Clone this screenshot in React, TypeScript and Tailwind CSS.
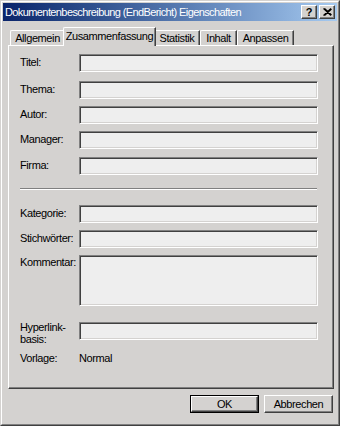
import React from "react";

const font = { fontFamily: '"Liberation Sans", Arial, sans-serif' };

function Field({ h = 18 }: { h?: number }) {
  return (
    <div
      className="w-[239px] border border-t-[#808080] border-l-[#808080] border-b-white border-r-white bg-[#eeeeee] shadow-[inset_1px_1px_0_#404040,inset_-1px_-1px_0_#d4d2d0]"
      style={{ height: h }}
    />
  );
}

function Row({ label, top, h = 18 }: { label: string; top: number; h?: number }) {
  return (
    <div className="flex items-center" style={{ marginTop: top }}>
      <div className="w-[59px] text-[11px] leading-[13px] tracking-[-0.4px] text-black -mt-[2px] whitespace-nowrap">{label}</div>
      <Field h={h} />
    </div>
  );
}

function Tab({ label, selected, w }: { label: string; selected?: boolean; w: number }) {
  if (selected) {
    return (
      <div
        className="relative z-10 -mx-[2px] h-[19px] -mb-[1px] flex items-start justify-center pt-[2px] border-t border-l border-t-white border-l-white border-r border-r-[#404040] bg-[#d4d2d0] rounded-tl-[2px] shadow-[inset_-1px_0_0_#808080] text-[11px] leading-[13px] tracking-[-0.4px]"
        style={{ width: w + 4 }}
      >
        {label}
      </div>
    );
  }
  return (
    <div
      className="h-[15px] flex items-start justify-center pt-[1px] border-t border-l border-t-white border-l-white border-r border-r-[#404040] shadow-[inset_-1px_0_0_#808080] rounded-tl-[2px] text-[11px] leading-[13px] tracking-[-0.4px]"
      style={{ width: w }}
    >
      {label}
    </div>
  );
}

export default function App() {
  return (
    <div
      className="w-[340px] h-[426px] bg-[#d4d2d0] border border-t-[#d4d2d0] border-l-[#d4d2d0] border-r-[#404040] border-b-[#404040] text-black overflow-hidden"
      style={font}
    >
      <div className="h-full w-full border border-t-white border-l-white border-r-[#808080] border-b-[#808080] flex flex-col px-[1px] pt-[1px]">
        {/* Title bar */}
        <div className="h-[18px] flex items-center justify-between bg-gradient-to-r from-[#0a246a] to-[#a6caf0] pl-[2px] pr-[2px]">
          <span className="text-white text-[11px] tracking-[-0.6px] leading-[13px]">
            Dokumentenbeschreibung (EndBericht) Eigenschaften
          </span>
          <div className="flex gap-[2px]">
            <div className="w-[16px] h-[14px] bg-[#d4d2d0] border border-t-white border-l-white border-r-[#404040] border-b-[#404040] shadow-[inset_-1px_-1px_0_#808080] flex items-center justify-center text-[11px] font-bold leading-none">
              ?
            </div>
            <div className="w-[16px] h-[14px] bg-[#d4d2d0] border border-t-white border-l-white border-r-[#404040] border-b-[#404040] shadow-[inset_-1px_-1px_0_#808080] flex items-center justify-center">
              <svg width="9" height="8" viewBox="0 0 9 8">
                <path d="M0.5 0.5 L8 7.5 M1.5 0.5 L8.5 7 M8 0.5 L0.5 7.5 M8.5 1 L1.5 7.5" stroke="black" strokeWidth="1.2" />
              </svg>
            </div>
          </div>
        </div>

        {/* Tabs */}
        <div className="flex items-end pl-[7px] mt-[6px] h-[18px]">
          <Tab label="Allgemein" w={55} />
          <Tab label="Zusammenfassung" selected w={89} />
          <Tab label="Statistik" w={46} />
          <Tab label="Inhalt" w={37} />
          <Tab label="Anpassen" w={57} />
        </div>

        {/* Panel */}
        <div className="ml-[5px] w-[326px] h-[344px] border border-t-white border-l-white border-r-[#404040] border-b-[#404040] shadow-[inset_-1px_-1px_0_#808080] pl-[11px] flex flex-col">
          <Row label="Titel:" top={8} />
          <Row label="Thema:" top={9} />
          <Row label="Autor:" top={7} />
          <Row label="Manager:" top={7} />
          <Row label="Firma:" top={8} />
          <div className="mt-[13px] w-[297px] h-[2px] border-t border-t-[#808080] border-b border-b-white" />
          <Row label="Kategorie:" top={15} />
          <Row label="Stichwörter:" top={7} />
          <div className="flex items-start mt-[7px]">
            <div className="w-[59px] text-[11px] leading-[13px] tracking-[-0.4px] pt-[1px]">Kommentar:</div>
            <Field h={51} />
          </div>
          <div className="flex items-center mt-[11px]">
            <div className="w-[59px] text-[11px] leading-[12px] tracking-[-0.4px] mt-[4px]">
              Hyperlink-
              <br />
              basis:
            </div>
            <Field h={18} />
          </div>
          <div className="flex mt-[7px] text-[11px] leading-[13px] tracking-[-0.4px]">
            <div className="w-[59px]">Vorlage:</div>
            <div>Normal</div>
          </div>
        </div>

        {/* Buttons */}
        <div className="flex justify-end gap-[5px] mt-[6px] pr-[4px]">
          <div className="w-[69px] h-[18px] border border-black flex">
            <div className="flex-1 border border-t-white border-l-white border-r-[#404040] border-b-[#404040] shadow-[inset_-1px_-1px_0_#808080] flex items-center justify-center text-[11px] tracking-[-0.4px]">
              OK
            </div>
          </div>
          <div className="w-[69px] h-[18px] border border-t-white border-l-white border-r-[#404040] border-b-[#404040] shadow-[inset_-1px_-1px_0_#808080] flex items-center justify-center text-[11px] tracking-[-0.4px]">
            Abbrechen
          </div>
        </div>
      </div>
    </div>
  );
}
